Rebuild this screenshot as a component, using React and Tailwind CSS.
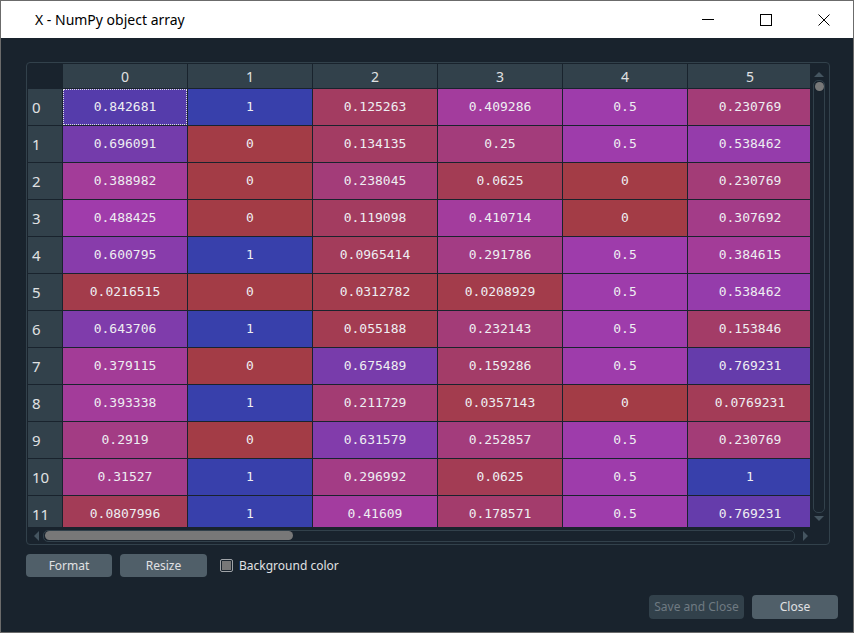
import React from 'react';

// table values as shown in the object array editor
const rows = [
    ['0.842681', '1', '0.125263', '0.409286', '0.5', '0.230769'],
    ['0.696091', '0', '0.134135', '0.25', '0.5', '0.538462'],
    ['0.388982', '0', '0.238045', '0.0625', '0', '0.230769'],
    ['0.488425', '0', '0.119098', '0.410714', '0', '0.307692'],
    ['0.600795', '1', '0.0965414', '0.291786', '0.5', '0.384615'],
    ['0.0216515', '0', '0.0312782', '0.0208929', '0.5', '0.538462'],
    ['0.643706', '1', '0.055188', '0.232143', '0.5', '0.153846'],
    ['0.379115', '0', '0.675489', '0.159286', '0.5', '0.769231'],
    ['0.393338', '1', '0.211729', '0.0357143', '0', '0.0769231'],
    ['0.2919', '0', '0.631579', '0.252857', '0.5', '0.230769'],
    ['0.31527', '1', '0.296992', '0.0625', '0.5', '1'],
    ['0.0807996', '1', '0.41609', '0.178571', '0.5', '0.769231'],
];

// hue goes from blue (largest) to red (smallest), drawn at 60% over the dark bg
const cellColor = (value) => {
    const h = 0.66 + 0.33 * (1 - value);
    const s = 0.7;
    const v = 1;
    const i = Math.floor(h * 6);
    const f = h * 6 - i;
    const p = v * (1 - s);
    const q = v * (1 - f * s);
    const t = v * (1 - (1 - f) * s);
    let rgb;
    switch (i % 6) {
        case 0: rgb = [v, t, p]; break;
        case 1: rgb = [q, v, p]; break;
        case 2: rgb = [p, v, t]; break;
        case 3: rgb = [p, q, v]; break;
        case 4: rgb = [t, p, v]; break;
        default: rgb = [v, p, q];
    }
    const bg = [25, 35, 45];
    const out = rgb.map((c, k) => Math.round(c * 255 * 0.6 + bg[k] * 0.4));
    return `rgb(${out[0]}, ${out[1]}, ${out[2]})`;
};

const ui = { fontFamily: '"Noto Sans", "Open Sans", sans-serif' };
const mono = { fontFamily: '"DejaVu Sans Mono", "Liberation Mono", monospace' };

const App = () => {
    return (
        <div className="w-[854px] h-[633px] bg-[#6b6b6b] pt-px pl-px overflow-hidden" style={ui}>
            <div className="w-[852px] h-[631px] bg-[#19232d] flex flex-col">
                {/* Title bar */}
                <div className="h-[37px] bg-white flex items-center">
                    <div className="pl-[34px] text-[14px] text-black flex-1">X - NumPy object array</div>
                    <div className="flex h-full">
                        <div className="w-[58px] flex items-center justify-center">
                            <div className="w-[12px] h-px bg-black" />
                        </div>
                        <div className="w-[58px] flex items-center justify-center">
                            <div className="w-[12px] h-[12px] border border-black" />
                        </div>
                        <div className="w-[58px] flex items-center justify-center">
                            <svg width="12" height="12" viewBox="0 0 12 12" fill="none" stroke="black" strokeWidth="1">
                                <path d="M0.5 0.5 L11.5 11.5 M11.5 0.5 L0.5 11.5" />
                            </svg>
                        </div>
                    </div>
                </div>

                {/* Table frame */}
                <div className="ml-[25px] mt-[24px] w-[804px] h-[483px] border border-[#32414b] rounded-[4px] flex flex-col">
                    <div className="flex pt-px pl-px">
                        {/* Viewport */}
                        <div className="w-[782px] h-[463px] overflow-hidden">
                            <div className="flex h-[25px]">
                                <div className="w-[35px] shrink-0 bg-[#19232d]" />
                                {[0, 1, 2, 3, 4, 5].map((c) => (
                                    <div key={c} className="w-[125px] shrink-0 h-[25px] bg-[#32414b] border-r border-b border-[#19232d] flex items-center justify-center text-[14px] text-[#e0e1e3]">
                                        {c}
                                    </div>
                                ))}
                            </div>
                            {rows.map((row, r) => (
                                <div key={r} className="flex h-[37px]">
                                    <div className="w-[35px] shrink-0 bg-[#32414b] border-r border-b border-[#19232d] flex items-center pl-[4px] text-[15px] text-[#e0e1e3]">
                                        {r}
                                    </div>
                                    {row.map((val, c) => (
                                        <div
                                            key={c}
                                            className="w-[125px] shrink-0 h-[37px] border-r border-b border-[#19232d] flex"
                                            style={{ backgroundColor: cellColor(parseFloat(val)) }}
                                        >
                                            <div
                                                className={
                                                    r === 0 && c === 0
                                                        ? 'flex-1 flex items-center justify-center border border-dotted border-[#e0e1e3] text-[13px] text-[#eeeef2]'
                                                        : 'flex-1 flex items-center justify-center text-[13px] text-[#eeeef2]'
                                                }
                                                style={mono}
                                            >
                                                {val}
                                            </div>
                                        </div>
                                    ))}
                                </div>
                            ))}
                        </div>

                        {/* Vertical scrollbar */}
                        <div className="w-[18px] h-[463px] flex flex-col items-center pt-[7px]">
                            <svg width="10" height="6" viewBox="0 0 10 6">
                                <path d="M0 6 L5 1 L10 6 Z" fill="#455560" />
                            </svg>
                            <div className="mt-[3px] w-[12px] flex-1 border border-[#32414b] rounded-[5px] pt-px flex justify-center">
                                <div className="w-[9px] h-[9px] rounded-full bg-[#787878]" />
                            </div>
                            <svg className="mt-[3px] mb-[5px]" width="10" height="6" viewBox="0 0 10 6">
                                <path d="M0 0 L5 5 L10 0 Z" fill="#455560" />
                            </svg>
                        </div>
                    </div>

                    {/* Horizontal scrollbar */}
                    <div className="h-[17px] flex items-center pl-[6px] pr-[20px]">
                        <svg width="6" height="10" viewBox="0 0 6 10">
                            <path d="M6 0 L1 5 L6 10 Z" fill="#455560" />
                        </svg>
                        <div className="ml-[4px] flex-1 h-[12px] border border-[#32414b] rounded-[5px] flex items-center pl-px">
                            <div className="w-[248px] h-[9px] rounded-full bg-[#787878]" />
                        </div>
                        <svg className="ml-[8px]" width="6" height="10" viewBox="0 0 6 10">
                            <path d="M0 0 L5 5 L0 10 Z" fill="#455560" />
                        </svg>
                    </div>
                </div>

                {/* Bottom controls */}
                <div className="flex items-center mt-[9px] ml-[25px] h-[23px]">
                    <div className="w-[86px] h-[23px] rounded-[4px] bg-[#505f69] flex items-center justify-center text-[12px] text-[#e0e1e3]">Format</div>
                    <div className="ml-[8px] w-[87px] h-[23px] rounded-[4px] bg-[#505f69] flex items-center justify-center text-[12px] text-[#e0e1e3]">Resize</div>
                    <div className="ml-[13px] w-[13px] h-[13px] border border-[#a0a4a8] rounded-[2px] flex items-center justify-center">
                        <div className="w-[9px] h-[9px] bg-[#787878]" />
                    </div>
                    <div className="ml-[6px] text-[12px] text-[#e0e1e3]">Background color</div>
                </div>

                <div className="flex justify-end mt-[18px] pr-[15px]">
                    <div className="w-[95px] h-[24px] rounded-[4px] bg-[#32414b] flex items-center justify-center text-[12px] text-[#6f7a82]">Save and Close</div>
                    <div className="ml-[8px] w-[86px] h-[24px] rounded-[4px] bg-[#505f69] flex items-center justify-center text-[12px] text-[#e0e1e3]">Close</div>
                </div>
            </div>
        </div>
    );
};

export default App;
